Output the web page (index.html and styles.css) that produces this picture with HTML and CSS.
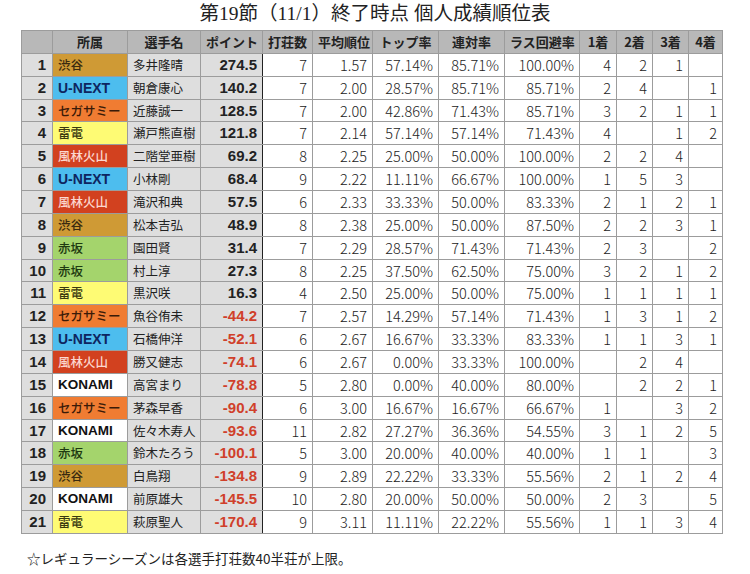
FILE: index.html
```html
<!DOCTYPE html>
<html lang="ja">
<head>
<meta charset="utf-8">
<link rel="stylesheet" href="styles.css">
</head>
<body>
<h1 class="title">第19節（11/1）終了時点 個人成績順位表</h1>
<table class="rank">
<colgroup>
<col class="c-rank"><col class="c-team"><col class="c-name"><col class="c-pt"><col class="c-games"><col class="c-avg"><col class="c-top"><col class="c-ren"><col class="c-las"><col class="c-n"><col class="c-n2"><col class="c-n2"><col class="c-n4">
</colgroup>
<thead>
<tr><th></th><th>所属</th><th>選手名</th><th>ポイント</th><th>打荘数</th><th>平均順位</th><th>トップ率</th><th>連対率</th><th>ラス回避率</th><th>1着</th><th>2着</th><th>3着</th><th>4着</th></tr>
</thead>
<tbody>
<tr><td class="r">1</td><td class="t shibuya">渋谷</td><td class="n">多井隆晴</td><td class="p">274.5</td><td>7</td><td>1.57</td><td>57.14%</td><td>85.71%</td><td>100.00%</td><td>4</td><td>2</td><td>1</td><td></td></tr>
<tr><td class="r">2</td><td class="t unext">U-NEXT</td><td class="n">朝倉康心</td><td class="p">140.2</td><td>7</td><td>2.00</td><td>28.57%</td><td>85.71%</td><td>85.71%</td><td>2</td><td>4</td><td></td><td>1</td></tr>
<tr><td class="r">3</td><td class="t sega">セガサミー</td><td class="n">近藤誠一</td><td class="p">128.5</td><td>7</td><td>2.00</td><td>42.86%</td><td>71.43%</td><td>85.71%</td><td>3</td><td>2</td><td>1</td><td>1</td></tr>
<tr><td class="r">4</td><td class="t raiden">雷電</td><td class="n">瀬戸熊直樹</td><td class="p">121.8</td><td>7</td><td>2.14</td><td>57.14%</td><td>57.14%</td><td>71.43%</td><td>4</td><td></td><td>1</td><td>2</td></tr>
<tr><td class="r">5</td><td class="t furin">風林火山</td><td class="n">二階堂亜樹</td><td class="p">69.2</td><td>8</td><td>2.25</td><td>25.00%</td><td>50.00%</td><td>100.00%</td><td>2</td><td>2</td><td>4</td><td></td></tr>
<tr><td class="r">6</td><td class="t unext">U-NEXT</td><td class="n">小林剛</td><td class="p">68.4</td><td>9</td><td>2.22</td><td>11.11%</td><td>66.67%</td><td>100.00%</td><td>1</td><td>5</td><td>3</td><td></td></tr>
<tr><td class="r">7</td><td class="t furin">風林火山</td><td class="n">滝沢和典</td><td class="p">57.5</td><td>6</td><td>2.33</td><td>33.33%</td><td>50.00%</td><td>83.33%</td><td>2</td><td>1</td><td>2</td><td>1</td></tr>
<tr><td class="r">8</td><td class="t shibuya">渋谷</td><td class="n">松本吉弘</td><td class="p">48.9</td><td>8</td><td>2.38</td><td>25.00%</td><td>50.00%</td><td>87.50%</td><td>2</td><td>2</td><td>3</td><td>1</td></tr>
<tr><td class="r">9</td><td class="t akasaka">赤坂</td><td class="n">園田賢</td><td class="p">31.4</td><td>7</td><td>2.29</td><td>28.57%</td><td>71.43%</td><td>71.43%</td><td>2</td><td>3</td><td></td><td>2</td></tr>
<tr><td class="r">10</td><td class="t akasaka">赤坂</td><td class="n">村上淳</td><td class="p">27.3</td><td>8</td><td>2.25</td><td>37.50%</td><td>62.50%</td><td>75.00%</td><td>3</td><td>2</td><td>1</td><td>2</td></tr>
<tr><td class="r">11</td><td class="t raiden">雷電</td><td class="n">黒沢咲</td><td class="p">16.3</td><td>4</td><td>2.50</td><td>25.00%</td><td>50.00%</td><td>75.00%</td><td>1</td><td>1</td><td>1</td><td>1</td></tr>
<tr><td class="r">12</td><td class="t sega">セガサミー</td><td class="n">魚谷侑未</td><td class="p neg">-44.2</td><td>7</td><td>2.57</td><td>14.29%</td><td>57.14%</td><td>71.43%</td><td>1</td><td>3</td><td>1</td><td>2</td></tr>
<tr><td class="r">13</td><td class="t unext">U-NEXT</td><td class="n">石橋伸洋</td><td class="p neg">-52.1</td><td>6</td><td>2.67</td><td>16.67%</td><td>33.33%</td><td>83.33%</td><td>1</td><td>1</td><td>3</td><td>1</td></tr>
<tr><td class="r">14</td><td class="t furin">風林火山</td><td class="n">勝又健志</td><td class="p neg">-74.1</td><td>6</td><td>2.67</td><td>0.00%</td><td>33.33%</td><td>100.00%</td><td></td><td>2</td><td>4</td><td></td></tr>
<tr><td class="r">15</td><td class="t konami">KONAMI</td><td class="n">高宮まり</td><td class="p neg">-78.8</td><td>5</td><td>2.80</td><td>0.00%</td><td>40.00%</td><td>80.00%</td><td></td><td>2</td><td>2</td><td>1</td></tr>
<tr><td class="r">16</td><td class="t sega">セガサミー</td><td class="n">茅森早香</td><td class="p neg">-90.4</td><td>6</td><td>3.00</td><td>16.67%</td><td>16.67%</td><td>66.67%</td><td>1</td><td></td><td>3</td><td>2</td></tr>
<tr><td class="r">17</td><td class="t konami">KONAMI</td><td class="n">佐々木寿人</td><td class="p neg">-93.6</td><td>11</td><td>2.82</td><td>27.27%</td><td>36.36%</td><td>54.55%</td><td>3</td><td>1</td><td>2</td><td>5</td></tr>
<tr><td class="r">18</td><td class="t akasaka">赤坂</td><td class="n">鈴木たろう</td><td class="p neg">-100.1</td><td>5</td><td>3.00</td><td>20.00%</td><td>40.00%</td><td>40.00%</td><td>1</td><td>1</td><td></td><td>3</td></tr>
<tr><td class="r">19</td><td class="t shibuya">渋谷</td><td class="n">白鳥翔</td><td class="p neg">-134.8</td><td>9</td><td>2.89</td><td>22.22%</td><td>33.33%</td><td>55.56%</td><td>2</td><td>1</td><td>2</td><td>4</td></tr>
<tr><td class="r">20</td><td class="t konami">KONAMI</td><td class="n">前原雄大</td><td class="p neg">-145.5</td><td>10</td><td>2.80</td><td>20.00%</td><td>50.00%</td><td>50.00%</td><td>2</td><td>3</td><td></td><td>5</td></tr>
<tr><td class="r">21</td><td class="t raiden">雷電</td><td class="n">萩原聖人</td><td class="p neg">-170.4</td><td>9</td><td>3.11</td><td>11.11%</td><td>22.22%</td><td>55.56%</td><td>1</td><td>1</td><td>3</td><td>4</td></tr>
</tbody>
</table>
<p class="note">☆レギュラーシーズンは各選手打荘数40半荘が上限。</p>
</body>
</html>
```
FILE: styles.css
```css
html, body {
  margin: 0;
  padding: 0;
  background: #ffffff;
}
body {
  width: 750px;
  height: 574px;
  overflow: hidden;
  font-family: "Noto Sans CJK JP", "Noto Sans", sans-serif;
  color: #111;
}
.title {
  margin: 0;
  height: 30px;
  line-height: 28px;
  text-align: center;
  font-family: "Liberation Serif", "Noto Sans CJK JP", serif;
  font-weight: normal;
  font-size: 19.5px;
  color: #222;
}
.rank {
  margin-left: 21px;
  border-collapse: collapse;
  table-layout: fixed;
  width: 702px;
  font-size: 14.5px;
}
.c-rank { width: 31px; }
.c-team { width: 75px; }
.c-name { width: 73px; }
.c-pt { width: 62px; }
.c-games { width: 50px; }
.c-avg { width: 60px; }
.c-top { width: 66px; }
.c-ren { width: 66px; }
.c-las { width: 75px; }
.c-n { width: 37px; }
.c-n2 { width: 36px; }
.c-n4 { width: 34px; }

.rank th, .rank td {
  border: 1px solid #9c9c9c;
  height: 22.86px;
  padding: 0 5px;
  box-sizing: border-box;
  white-space: nowrap;
  overflow: hidden;
  line-height: 20px;
}
.rank th {
  background: #b8b8b8;
  font-weight: bold;
  text-align: center;
  font-size: 13px;
  color: #222;
}
.rank td {
  text-align: right;
  font-weight: 300;
  color: #222;
}
.rank td.r {
  background: #dedede;
  font-weight: bold;
  font-family: "Liberation Sans", "Noto Sans CJK JP", sans-serif;
  font-size: 15px;
  padding-right: 6px;
}
.rank td.t {
  text-align: left;
  font-weight: 500;
  padding-left: 5px;
  font-size: 12.5px;
}
.rank td.n {
  background: #dedede;
  text-align: left;
  font-weight: normal;
  font-size: 12.5px;
}
.rank td.p {
  background: #dedede;
  font-weight: bold;
  font-family: "Liberation Sans", "Noto Sans CJK JP", sans-serif;
  font-size: 15px;
  border-right: 1px solid #222;
}
.rank td.p.neg {
  color: #d0402a;
}
.rank td.shibuya { background: #cf9a35; color: #3a2a10; }
.rank td.unext { background: #4dbdee; color: #0e2560; font-family: "Liberation Sans", sans-serif; font-weight: bold; font-size: 14px; }
.rank td.sega { background: #f07c32; color: #3a1a08; }
.rank td.raiden { background: #fefb74; color: #3a3a10; }
.rank td.furin { background: #d2411f; color: #fbd8d0; }
.rank td.akasaka { background: #a4d46c; color: #1e3a10; }
.rank td.konami { background: #ffffff; color: #111; font-family: "Liberation Sans", sans-serif; font-weight: bold; font-size: 13.5px; }

.note {
  margin: 14px 0 0 27px;
  line-height: 20px;
  font-size: 13.5px;
  color: #222;
}
```
